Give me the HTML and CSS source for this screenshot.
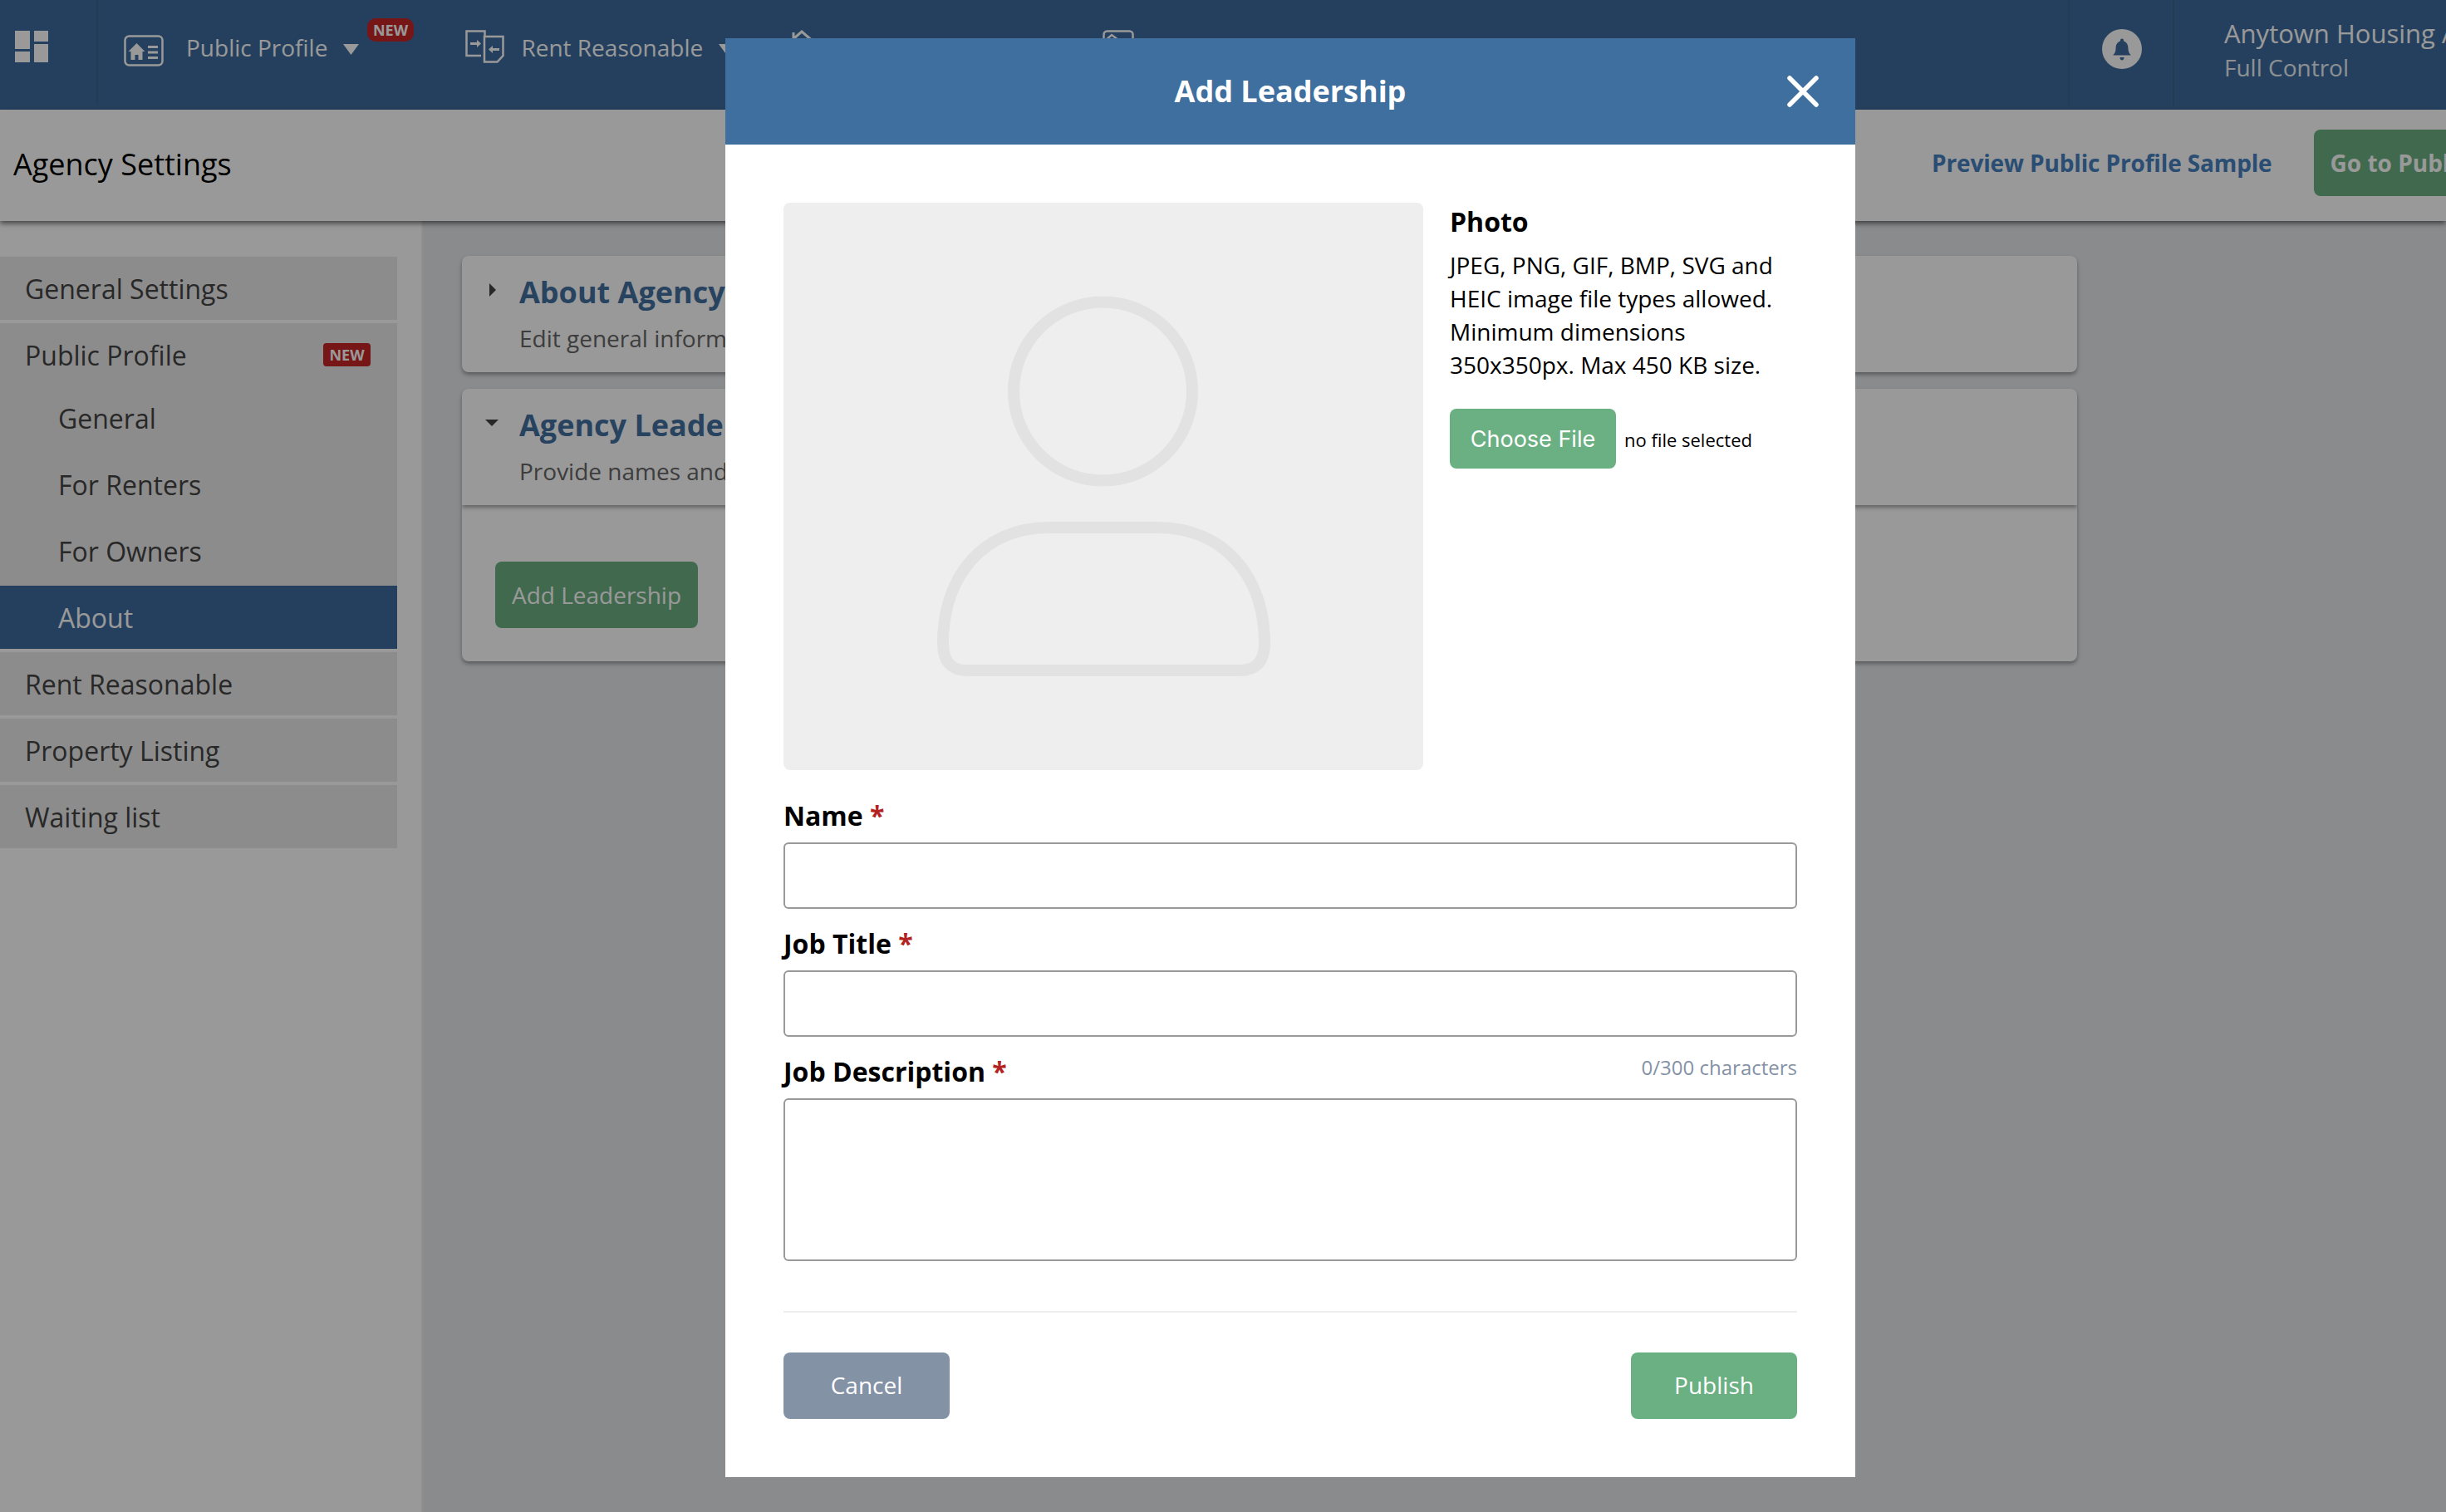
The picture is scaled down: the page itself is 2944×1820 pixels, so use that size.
FILE: index.html
```html
<!DOCTYPE html>
<html lang="en">
<head>
<meta charset="utf-8">
<title>Agency Settings</title>
<link rel="stylesheet" href="styles.css">
</head>
<body>
<div class="page">
  <header class="topbar">
    <div class="logo-cell">
      <svg class="logo" width="40" height="38" viewBox="0 0 40 38"><path d="M0 0h18v22H0zM23 0h17v13H23zM0 25h18v13H0zM23 16h17v22H23z"/></svg>
    </div>
    <nav class="nav">
      <div class="nav-item nav-item-profile">
        <svg class="nav-icon" width="48" height="38" viewBox="0 0 48 38"><rect x="1.500" y="1.500" width="45" height="35" rx="5" fill="none" stroke="#fff" stroke-width="2.500"/><path d="M15.500 10l-10 10h3v10h5v-6h4v6h5V20h3z" fill="#fff"/><path d="M29 13h12v3H29zM29 19.500h12v3H29zM29 26h12v3H29z" fill="#fff"/></svg>
        <span>Public Profile</span>
        <svg class="caret" width="19" height="13" viewBox="0 0 19 13"><path d="M0 0h19L9.500 13z"/></svg>
        <span class="badge badge-top">NEW</span>
      </div>
      <div class="nav-item nav-item-rent">
        <svg class="nav-icon" width="47" height="40" viewBox="0 0 47 40"><path d="M19 31H1.500V1.500h22V7" fill="none" stroke="#fff" stroke-width="2.500"/><path d="M23 8h22.500v23l-7 7.500H23z" fill="none" stroke="#fff" stroke-width="2.500"/><path d="M6 15h8v-3l5 4.500-5 4.500v-3H6zM41 22h-8v-3l-5 4.500 5 4.500v-3h8z" fill="#fff"/></svg>
        <span>Rent Reasonable</span>
        <svg class="caret" width="19" height="13" viewBox="0 0 19 13"><path d="M0 0h19L9.500 13z"/></svg>
      </div>
      <div class="nav-item nav-item-listing">
        <svg class="nav-icon" width="34" height="38" viewBox="0 0 34 38"><path d="M7 12V3M2 15L17 2l15 13M5 13v23h24V13" fill="none" stroke="#fff" stroke-width="3"/></svg>
        <span>Property Listing</span>
      </div>
      <div class="nav-item nav-item-waiting">
        <svg class="nav-icon" width="38" height="38" viewBox="0 0 38 38"><rect x="1.500" y="1.500" width="35" height="34" rx="4" fill="none" stroke="#fff" stroke-width="2.500"/><path d="M2 14L11 6l8 6" fill="none" stroke="#fff" stroke-width="2.500"/></svg>
        <span>Waiting List</span>
      </div>
    </nav>
    <div class="bell-cell">
      <svg width="48" height="48" viewBox="0 0 48 48"><circle cx="24" cy="24" r="24" fill="#fff"/><path d="M24 11.500c1.200 0 2 .8 2 2v1c3.800 1.200 5.500 4.500 5.500 9 0 3.500 1 5.500 3 7.500v.5h-21v-.5c2-2 3-4 3-7.500 0-4.500 1.700-7.800 5.500-9v-1c0-1.200.8-2 2-2zM21.500 34h5c0 2-1 3.500-2.500 3.500s-2.500-1.500-2.500-3.500z" fill="#3e6c9e"/></svg>
    </div>
    <div class="user-cell">
      <div class="user-name">Anytown Housing Authority</div>
      <div class="user-role">Full Control</div>
    </div>
  </header>

  <div class="subbar">
    <h1 class="page-title">Agency Settings</h1>
    <div class="subbar-actions">
      <a class="preview-link">Preview Public Profile Sample</a>
      <span class="btn btn-green btn-strong">Go to Public Profile</span>
    </div>
  </div>

  <div class="main">
    <aside class="sidebar">
      <div class="side-item">General Settings</div>
      <div class="side-group">
        <div class="side-item side-head">Public Profile <span class="badge badge-side">NEW</span></div>
        <div class="side-item side-sub">General</div>
        <div class="side-item side-sub">For Renters</div>
        <div class="side-item side-sub">For Owners</div>
        <div class="side-item side-sub side-active">About</div>
      </div>
      <div class="side-item">Rent Reasonable</div>
      <div class="side-item">Property Listing</div>
      <div class="side-item">Waiting list</div>
    </aside>
    <section class="content">
      <div class="card">
        <svg class="tri" width="10" height="16" viewBox="0 0 10 16"><path d="M1 0l8 8-8 8z"/></svg>
        <h2 class="card-title">About Agency</h2>
        <p class="card-sub">Edit general information</p>
      </div>
      <div class="card card-open">
        <svg class="tri tri-open" width="16" height="10" viewBox="0 0 16 10"><path d="M0 1h16L8 9z"/></svg>
        <h2 class="card-title">Agency Leadership</h2>
        <p class="card-sub">Provide names and</p>
      </div>
      <div class="card-body">
        <span class="btn btn-green btn-add">Add Leadership</span>
      </div>
    </section>
  </div>
</div>

<div class="overlay">
  <div class="modal">
    <div class="modal-head">
      <span class="modal-title">Add Leadership</span>
      <svg class="modal-close" width="38" height="38" viewBox="0 0 38 38"><path d="M3 3l32 32M35 3L3 35" stroke="#fff" stroke-width="5.500" stroke-linecap="round"/></svg>
    </div>
    <div class="modal-body">
      <div class="photo-row">
        <div class="photo-box">
          <svg width="770" height="683" viewBox="0 0 770 683"><circle cx="384.500" cy="227" r="107.500" fill="none" stroke="#e2e2e2" stroke-width="14"/><path d="M221 563H549Q579 563 579 530C579 450 530 391 450 391H320C240 391 192 450 192 530Q192 563 221 563Z" fill="none" stroke="#e2e2e2" stroke-width="14"/></svg>
        </div>
        <div class="photo-info">
          <div class="photo-title">Photo</div>
          <p class="photo-text">JPEG, PNG, GIF, BMP, SVG and<br>HEIC image file types allowed.<br>Minimum dimensions<br>350x350px. Max 450 KB size.</p>
          <div class="file-row">
            <span class="btn btn-green btn-file">Choose File</span>
            <span class="file-note">no file selected</span>
          </div>
        </div>
      </div>
      <div class="field-label">Name <span class="req">*</span></div>
      <div class="input"></div>
      <div class="field-label">Job Title <span class="req">*</span></div>
      <div class="input"></div>
      <div class="field-label field-label-count">
        <span>Job Description <span class="req">*</span></span>
        <span class="counter">0/300 characters</span>
      </div>
      <div class="input input-area"></div>
      <div class="modal-rule"></div>
      <div class="modal-actions">
        <span class="btn btn-cancel">Cancel</span>
        <span class="btn btn-green btn-publish">Publish</span>
      </div>
    </div>
  </div>
</div>
</body>
</html>
```

FILE: styles.css
```css
* { box-sizing: border-box; }
html, body { margin: 0; padding: 0; }
body {
  width: 2944px;
  height: 1820px;
  overflow: hidden;
  position: relative;
  font-family: "Open Sans", "Noto Sans", sans-serif;
  color: #333;
  background: #e6e8eb;
}
.page { display: flex; flex-direction: column; height: 1820px; }

/* top bar */
.topbar {
  flex: none;
  height: 132px;
  display: flex;
  background: #3e6c9e;
  color: #fff;
}
.logo-cell {
  flex: none;
  width: 118px;
  height: 126px;
  padding: 37px 0 0 18px;
  border-right: 2px solid #396490;
}
.logo { display: block; fill: #fff; }
.nav { flex: 1; display: flex; align-items: flex-start; min-width: 0; }
.nav-item {
  position: relative;
  display: flex;
  align-items: center;
  height: 38px;
  margin-top: 38px;
  font-size: 28px;
  white-space: nowrap;
}
.nav-icon { flex: none; display: block; }
.caret { flex: none; fill: #fff; margin-left: 19px; margin-top: 5px; }
.nav-item-profile { margin-left: 31px; }
.nav-item-profile .nav-icon { margin: 7px 27px 0 0; }
.nav-item-rent { margin-left: 128px; }
.nav-item-rent .nav-icon { margin: -2px 20px 0 0; }
.nav-item-listing { margin-left: 64px; margin-top: 36px; }
.nav-item-listing .nav-icon { margin-right: 22px; }
.nav-item-waiting { margin-left: 118px; margin-top: 36px; }
.nav-item-waiting .nav-icon { margin-right: 22px; }
.bell-cell {
  flex: none;
  width: 128px;
  height: 128px;
  padding: 35px 0 0 39px;
  border-left: 2px solid #396490;
  border-right: 2px solid #396490;
}
.bell-cell svg { display: block; }
.user-cell {
  flex: none;
  width: 327px;
  padding: 18px 0 0 60px;
  overflow: hidden;
  white-space: nowrap;
}
.user-name { font-size: 31px; line-height: 44px; }
.user-role { font-size: 28px; line-height: 38px; font-weight: 400; opacity: .9; }

.badge {
  display: inline-block;
  background: #c52525;
  color: #fff;
  font-weight: 700;
  font-size: 18px;
  line-height: 28px;
  text-align: center;
}
.badge-top {
  position: absolute;
  left: 293px;
  top: -16px;
  width: 56px;
  height: 28px;
  border-radius: 10px;
}
.badge-side {
  position: absolute;
  right: 32px;
  top: 24px;
  width: 57px;
  height: 28px;
  border-radius: 4px;
}

/* sub bar */
.subbar {
  flex: none;
  position: relative;
  z-index: 1;
  height: 134px;
  display: flex;
  justify-content: space-between;
  align-items: center;
  padding: 0 0 4px 16px;
  background: #fff;
  box-shadow: 0 3px 6px rgba(0, 0, 0, .55);
}
.page-title { margin: 0; font-size: 36px; font-weight: 400; color: #000; }
.subbar-actions {
  flex: none;
  width: 619px;
  height: 80px;
  margin-top: -2px;
  display: flex;
  align-items: center;
  gap: 50px;
  overflow: hidden;
  white-space: nowrap;
}
.preview-link { flex: none; font-size: 28px; font-weight: 700; color: #4680c0; letter-spacing: -.14px; }

.btn {
  flex: none;
  display: flex;
  align-items: center;
  justify-content: center;
  border-radius: 8px;
  color: #fff;
  font-size: 28px;
  white-space: nowrap;
}
.btn-green { background: #6bb083; }
.btn-strong { width: 380px; height: 80px; font-weight: 700; justify-content: flex-start; padding-left: 20px; }

/* main */
.main { flex: 1; display: flex; min-height: 0; }
.sidebar {
  flex: none;
  width: 509px;
  padding: 43px 29px 0 0;
  background: #fff;
  border-right: 2px solid #f0f0f0;
}
.side-item {
  position: relative;
  height: 76px;
  display: flex;
  align-items: center;
  padding-left: 30px;
  margin-bottom: 4px;
  background: #e9e9e9;
  font-size: 32px;
  color: #444;
}
.side-group { margin-bottom: 4px; background: #e9e9e9; }
.side-group .side-item { margin-bottom: 0; }
.side-group .side-sub { height: 80px; padding: 0 0 3px 70px; }
.side-group .side-active { height: 76px; padding-bottom: 0; background: #3e6c9e; color: #fff; }

.content { flex: 1; padding: 42px 0 0 47px; }
.card, .card-body {
  position: relative;
  width: 1944px;
  background: #fff;
  border-radius: 8px;
  box-shadow: 0 3px 5px rgba(0, 0, 0, .35);
}
.card { height: 140px; margin-bottom: 20px; padding: 15px 0 0 69px; overflow: hidden; white-space: nowrap; }
.card-open { z-index: 1; margin-bottom: 0; border-radius: 8px 8px 0 0; }
.card-body { height: 188px; padding: 68px 0 0 40px; border-radius: 0 0 8px 8px; }
.card-title { margin: 0; font-size: 36px; line-height: 58px; font-weight: 700; color: #43709f; }
.card-sub { margin: 6px 0 0; font-size: 28px; line-height: 40px; color: #666; }
.tri { position: absolute; left: 32px; top: 33px; fill: #444; }
.tri-open { left: 28px; top: 36px; }
.btn-add { width: 244px; height: 80px; }

/* overlay & modal */
.overlay {
  position: absolute;
  inset: 0;
  z-index: 10;
  padding: 46px 0 0 873px;
  background: rgba(0, 0, 0, .4);
}
.modal { width: 1360px; height: 1732px; background: #fff; color: #000; }
.modal-head {
  position: relative;
  height: 128px;
  display: flex;
  align-items: center;
  justify-content: center;
  padding-bottom: 2px;
  background: #3f6f9e;
  color: #fff;
}
.modal-title { font-size: 36px; font-weight: 700; }
.modal-close { position: absolute; right: 44px; top: 45px; }
.modal-body { padding: 70px 70px 0; }
.photo-row { display: flex; gap: 32px; height: 683px; margin-bottom: 13px; }
.photo-box { flex: none; width: 770px; height: 683px; background: #eee; border-radius: 8px; }
.photo-box svg { display: block; }
.photo-info { flex: 1; }
.photo-title { font-size: 32px; line-height: 44px; font-weight: 700; margin-top: 1px; }
.photo-text { margin: 10px 0 0; font-size: 28px; line-height: 40px; }
.file-row { display: flex; align-items: center; gap: 10px; margin-top: 33px; }
.btn-file { width: 200px; height: 72px; font-family: Inter, "Open Sans", sans-serif; font-size: 27px; }
.file-note { font-size: 22px; margin-top: 2px; }

.field-label { height: 74px; padding-top: 20px; font-size: 32px; line-height: 44px; font-weight: 700; }
.field-label-count { display: flex; justify-content: space-between; align-items: flex-start; }
.req { color: #b22222; }
.counter { font-size: 24px; font-weight: 400; line-height: 34px; color: #8492a6; }
.input { height: 80px; border: 2px solid #999; border-radius: 6px; background: #fff; }
.input-area { height: 196px; }
.modal-rule { height: 2px; margin-top: 60px; background: #eee; }
.modal-actions { display: flex; justify-content: space-between; margin-top: 48px; }
.btn-cancel, .btn-publish { width: 200px; height: 80px; padding-bottom: 2px; }
.btn-cancel { background: #8492a6; }
```
